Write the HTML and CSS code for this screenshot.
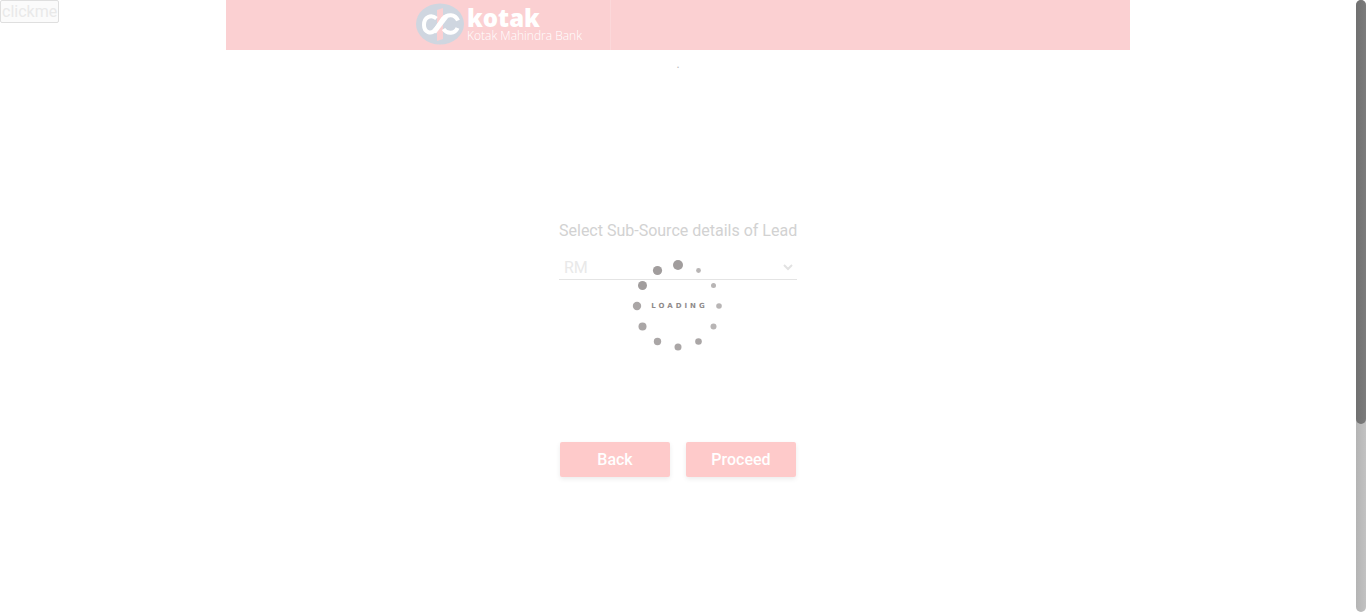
FILE: index.html
```html
<!DOCTYPE html>
<html lang="en">
<head>
<meta charset="utf-8">
<title>Kotak Mahindra Bank</title>
<link rel="stylesheet" href="styles.css">
</head>
<body>
<div class="page">
  <div class="view">
    <button class="debug" type="button">clickme</button>
    <div class="container">
      <header class="header">
        <div class="brand">
          <svg class="emblem" viewBox="0 0 48 42" aria-hidden="true">
            <ellipse cx="24" cy="21" rx="24" ry="20.5" fill="#cfd6e0"/>
            <path d="M21 7l6-2v31l-6 2z" fill="#fbd0d2"/>
            <path d="M42 17.500C39 10.500 31 11 27 15.500L20 26C15 32.500 8 29 8 22C8 14 15 11 20.500 15.500" fill="none" stroke="#fff" stroke-width="4"/>
            <path d="M27.500 26C31 31.500 39 31 41.500 25" fill="none" stroke="#fff" stroke-width="4"/>
            <path d="M30 13.500L18 29" stroke="#fff" stroke-width="5"/>
          </svg>
          <div class="names">
            <span class="logo-word">kotak</span>
            <span class="logo-sub">Kotak Mahindra Bank</span>
          </div>
        </div>
      </header>
      <main class="main">
        <p class="dot">.</p>
        <form class="form">
          <label class="label" for="source">Select Sub-Source details of Lead</label>
          <div class="field">
            <select class="select" id="source"><option>RM</option></select>
            <svg class="chevron" viewBox="0 0 10 7" aria-hidden="true"><path d="M1 1l4 4 4-4" fill="none" stroke="#e2e2e2" stroke-width="2"/></svg>
          </div>
          <div class="actions">
            <button class="btn" type="button">Back</button>
            <button class="btn" type="button">Proceed</button>
          </div>
        </form>
      </main>
    </div>
    <div class="overlay" role="status">
      <svg class="spinner" viewBox="-46 -46 92 92" aria-hidden="true">
        <g fill="#a19d9d">
          <circle cx="0" cy="-41" r="5"/>
          <circle cx="-20.500" cy="-35.500" r="4.600"/>
          <circle cx="-35.500" cy="-20.500" r="4.500"/>
        </g>
        <g fill="#aaa6a6">
          <circle cx="-41" cy="0" r="4.200"/>
          <circle cx="-35.500" cy="20.500" r="4"/>
          <circle cx="-20.500" cy="35.500" r="3.700"/>
          <circle cx="0" cy="41" r="3.500"/>
          <circle cx="20.500" cy="35.500" r="3.300"/>
        </g>
        <g fill="#b8b5b5">
          <circle cx="35.500" cy="20.500" r="3"/>
          <circle cx="41" cy="0" r="2.800"/>
          <circle cx="35.500" cy="-20.500" r="2.500"/>
          <circle cx="20.500" cy="-35.500" r="2.400"/>
        </g>
      </svg>
      <span class="loading">LOADING</span>
    </div>
  </div>
  <div class="track"><div class="thumb"></div></div>
</div>
</body>
</html>
```
FILE: styles.css
```css
* { box-sizing: border-box; }
body { margin: 0; background: #fff; font-family: Roboto, "Liberation Sans", sans-serif; font-size: 16px; }
.page { display: flex; height: 100vh; overflow: hidden; }
.view { position: relative; flex: 1; }
.debug {
  position: absolute; top: 0; left: 0; padding: 2px 1px 1px;
  border: 1px solid #dfdfdf; border-radius: 2px; background: #fbfbfb;
  color: #e9e9e9; font: 16px/18px Roboto, sans-serif;
}
.container { width: 66.6667%; margin: 0 auto; }
.header { display: flex; height: 50px; background: #fbd0d2; }
.brand {
  display: flex; gap: 3px; width: 385px; padding: 3px 0 0 190px;
  border-right: 1px solid #fbd8da;
}
.emblem { flex: none; width: 48px; height: 42px; }
.names { display: flex; flex-direction: column; color: #fff; white-space: nowrap; }
.logo-word { font: 800 24px/30px "Open Sans", sans-serif; }
.logo-sub { margin-top: -4px; font: 300 12px/14px "Open Sans", sans-serif; }
.main { display: flex; flex-direction: column; align-items: center; }
.dot { margin: 6px 0 0; font-size: 12px; line-height: 16px; color: #bbb; }
.form { display: flex; flex-direction: column; margin-top: 148px; width: 238px; }
.label { color: #d2d2d2; font-weight: 400; line-height: 22px; white-space: nowrap; }
.field { display: flex; align-items: center; margin-top: 14px; padding-right: 4px; border-bottom: 1px solid #e4e4e4; }
.select {
  appearance: none; flex: 1; height: 23px; padding: 0 5px; border: 0;
  background: transparent; color: #e9e9e9; font: 16px/23px Roboto, sans-serif;
}
.chevron { width: 10px; height: 7px; }
.actions { display: flex; gap: 16px; margin: 162px 1px 0; }
.btn {
  flex: 1; height: 35px; padding: 0; border: 0; border-radius: 2px;
  background: #fecaca; color: #fff; box-shadow: 0 2px 5px rgba(0, 0, 0, 0.08);
  font: 500 16px/35px Roboto, sans-serif;
}
.overlay { position: absolute; inset: 0; display: grid; place-items: center; pointer-events: none; }
.spinner, .loading { grid-area: 1 / 1; }
.spinner { width: 92px; height: 92px; }
.loading { padding: 1px 0 0 3px; color: #8f8b8b; font: bold 7px/9px "DejaVu Sans", sans-serif; letter-spacing: 3px; }
.track { width: 10px; border-radius: 5px; background: linear-gradient(90deg, #b4b4b4, #c2c2c2); }
.thumb { height: 69.3%; border-radius: 5px; background: linear-gradient(90deg, #707070, #7c7c7c); }
```
